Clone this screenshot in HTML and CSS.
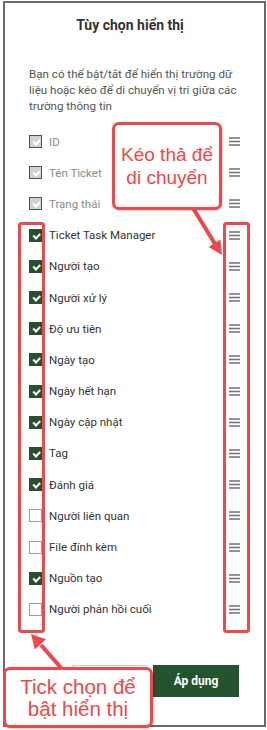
FILE: index.html
```html
<html>

<head>
    <meta charset="utf-8">
    <link rel="stylesheet" href="styles.css">
</head>

<body>
    <div class="dialog">
        <h2 class="dialog-title">Tùy chọn hiển thị</h2>
        <p class="dialog-desc">Bạn có thể bật/tắt để hiển thị trường dữ liệu hoặc kéo để di chuyển vị trí giữa các trường thông tin</p>
        <ul class="field-list">
            <li class="field locked"><span class="check on"></span><span class="field-name">ID</span><svg class="drag" viewBox="0 0 11 9"><path d="M0 1h11M0 4.5h11M0 8h11" /></svg></li>
            <li class="field locked"><span class="check on"></span><span class="field-name">Tên Ticket</span><svg class="drag" viewBox="0 0 11 9"><path d="M0 1h11M0 4.5h11M0 8h11" /></svg></li>
            <li class="field locked"><span class="check on"></span><span class="field-name">Trạng thái</span><svg class="drag" viewBox="0 0 11 9"><path d="M0 1h11M0 4.5h11M0 8h11" /></svg></li>
            <li class="field"><span class="check on"></span><span class="field-name">Ticket Task Manager</span><svg class="drag" viewBox="0 0 11 9"><path d="M0 1h11M0 4.5h11M0 8h11" /></svg></li>
            <li class="field"><span class="check on"></span><span class="field-name">Người tạo</span><svg class="drag" viewBox="0 0 11 9"><path d="M0 1h11M0 4.5h11M0 8h11" /></svg></li>
            <li class="field"><span class="check on"></span><span class="field-name">Người xử lý</span><svg class="drag" viewBox="0 0 11 9"><path d="M0 1h11M0 4.5h11M0 8h11" /></svg></li>
            <li class="field"><span class="check on"></span><span class="field-name">Độ ưu tiên</span><svg class="drag" viewBox="0 0 11 9"><path d="M0 1h11M0 4.5h11M0 8h11" /></svg></li>
            <li class="field"><span class="check on"></span><span class="field-name">Ngày tạo</span><svg class="drag" viewBox="0 0 11 9"><path d="M0 1h11M0 4.5h11M0 8h11" /></svg></li>
            <li class="field"><span class="check on"></span><span class="field-name">Ngày hết hạn</span><svg class="drag" viewBox="0 0 11 9"><path d="M0 1h11M0 4.5h11M0 8h11" /></svg></li>
            <li class="field"><span class="check on"></span><span class="field-name">Ngày cập nhật</span><svg class="drag" viewBox="0 0 11 9"><path d="M0 1h11M0 4.5h11M0 8h11" /></svg></li>
            <li class="field"><span class="check on"></span><span class="field-name">Tag</span><svg class="drag" viewBox="0 0 11 9"><path d="M0 1h11M0 4.5h11M0 8h11" /></svg></li>
            <li class="field"><span class="check on"></span><span class="field-name">Đánh giá</span><svg class="drag" viewBox="0 0 11 9"><path d="M0 1h11M0 4.5h11M0 8h11" /></svg></li>
            <li class="field"><span class="check"></span><span class="field-name">Người liên quan</span><svg class="drag" viewBox="0 0 11 9"><path d="M0 1h11M0 4.5h11M0 8h11" /></svg></li>
            <li class="field"><span class="check"></span><span class="field-name">File đính kèm</span><svg class="drag" viewBox="0 0 11 9"><path d="M0 1h11M0 4.5h11M0 8h11" /></svg></li>
            <li class="field"><span class="check on"></span><span class="field-name">Nguồn tạo</span><svg class="drag" viewBox="0 0 11 9"><path d="M0 1h11M0 4.5h11M0 8h11" /></svg></li>
            <li class="field"><span class="check"></span><span class="field-name">Người phản hồi cuối</span><svg class="drag" viewBox="0 0 11 9"><path d="M0 1h11M0 4.5h11M0 8h11" /></svg></li>
        </ul>
        <div class="dialog-actions">
            <button class="btn btn-cancel">Hủy bỏ</button>
            <button class="btn btn-apply">Áp dụng</button>
        </div>
    </div>

    <!-- annotations drawn over the screenshot -->
    <svg class="notes" width="267" height="730" viewBox="0 0 267 730">
        <rect x="19.5" y="223.5" width="24" height="408" rx="2" />
        <rect x="224.5" y="223.5" width="24" height="408" rx="2" />
        <line x1="193" y1="208" x2="215" y2="244" />
        <polygon points="222,255 208.6,246.9 220.4,239.5" />
        <line x1="62" y1="669" x2="41" y2="645" />
        <polygon points="31,634 45.9,639.2 34.9,649.4" />
    </svg>
    <div class="callout callout-drag">Kéo thả để<br>di chuyển</div>
    <div class="callout callout-tick">Tick chọn để<br>bật hiển thị</div>
</body>

</html>
```

FILE: styles.css
```css
* {
    box-sizing: border-box;
}

body {
    position: relative;
    margin: 0;
    width: 267px;
    height: 730px;
    background-color: white;
    font-family: Roboto, "Liberation Sans", sans-serif;
    color: #333;
}

.dialog {
    margin: 1px 0 0 3px;
    width: 263px;
    height: 726px;
    padding: 12px 23px 0 24px;
    border: 2px solid #6a6a6a;
    background-color: white;
}

.dialog-title {
    margin: 0;
    padding-right: 10px;
    font-size: 14px;
    font-weight: bold;
    line-height: 20px;
    text-align: center;
    color: #333;
}

.dialog-desc {
    margin: 31px 0 0;
    font-size: 11.6px;
    line-height: 16px;
    color: #555;
}

.field-list {
    margin: 12px 0 0;
    padding: 0;
    list-style: none;
}

.field {
    display: flex;
    align-items: center;
    height: 31.2px;
    font-size: 11.5px;
}

.field-name {
    flex: 1;
}

.field.locked .field-name {
    color: #8a8a8a;
}

.check {
    position: relative;
    width: 13px;
    height: 13px;
    margin-right: 7px;
    border: 1px solid #9d9d9d;
    background-color: white;
}

.check.on {
    border-color: #24512e;
    background-color: #24512e;
}

.field.locked .check.on {
    border-color: #3e5e40;
    background-color: #d2d2d2;
}

.check.on::after {
    content: "";
    position: absolute;
    left: 3px;
    top: 3px;
    width: 5px;
    height: 2.5px;
    border-left: 2px solid white;
    border-bottom: 2px solid white;
    transform: rotate(-45deg);
}

.drag {
    width: 11px;
    height: 9px;
    margin-right: 1px;
    stroke: #727272;
    stroke-width: 1.3;
    fill: none;
}

.dialog-actions {
    display: flex;
    justify-content: flex-end;
    gap: 6px;
    margin-top: 40px;
    padding-right: 2px;
}

.btn {
    height: 32px;
    font-family: Roboto, "Liberation Sans", sans-serif;
    font-size: 12px;
    font-weight: bold;
}

.btn-cancel {
    width: 75px;
    border: 1px solid #d0d0d0;
    background-color: white;
    color: #333;
}

.btn-apply {
    width: 86px;
    border: none;
    background-color: #25532f;
    color: white;
}

.notes {
    position: absolute;
    left: 0;
    top: 0;
    pointer-events: none;
}

.notes rect {
    fill: none;
    stroke: #f0474b;
    stroke-width: 3;
}

.notes line {
    stroke: #f0474b;
    stroke-width: 4;
}

.notes polygon {
    fill: #f0474b;
}

.callout {
    position: absolute;
    display: flex;
    align-items: center;
    justify-content: center;
    border: 3px solid #f0474b;
    border-radius: 7px;
    background-color: white;
    font-family: "Liberation Sans", Arial, sans-serif;
    color: #f0474b;
    text-align: center;
    box-shadow: 1px 1px 2px rgba(0, 0, 0, 0.2);
}

.callout-drag {
    left: 112px;
    top: 122px;
    width: 110px;
    height: 88px;
    font-size: 19px;
    line-height: 23px;
}

.callout-tick {
    left: 3px;
    top: 667px;
    width: 150px;
    height: 61px;
    font-size: 20.5px;
    line-height: 22px;
}
```
